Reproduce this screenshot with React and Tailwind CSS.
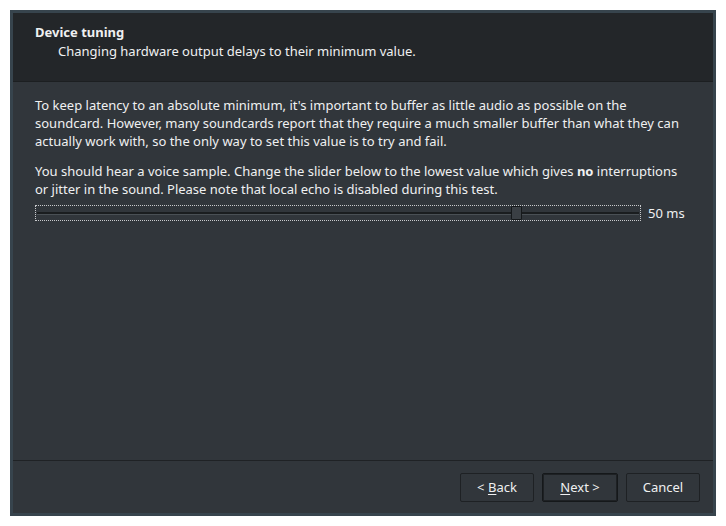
import React from 'react';

const font = { fontFamily: '"Noto Sans", "Open Sans", sans-serif' };

function WizardButton({ children, isDefault }) {
  return (
    <button
      className={
        'h-[29px] rounded-[2px] border bg-[#31363b] text-[13px] text-[#eff0f1] ' +
        (isDefault
          ? 'w-[76px] border-[#15181a] shadow-[inset_0_0_0_1px_#1e2124]'
          : 'w-[74px] border-[#1e2124]')
      }
    >
      {children}
    </button>
  );
}

function Slider({ value }) {
  return (
    <div className="flex items-center gap-[7px] pl-[22px]">
      <div className="relative h-[16px] w-[606px] border border-dotted border-[#c8cacc]">
        <div className="absolute left-[1px] right-[1px] top-[6px] h-[2px] bg-[#1a1d1f]" />
        <div className="absolute left-[1px] right-[1px] top-[8px] h-[1px] bg-[#4a5055]" />
        <div className="absolute left-[475px] top-[0px] h-[14px] w-[11px] rounded-[1px] border border-[#16191b] bg-[#3a3f44]" />
      </div>
      <span className="text-[13px]">{value} ms</span>
    </div>
  );
}

export default function App() {
  return (
    <div className="h-[526px] w-[726px] bg-white p-[10px]" style={font}>
      <div className="flex h-[506px] w-[706px] flex-col border-[3px] border-[#37444d] bg-[#31363b] text-[#eff0f1]">
        <div className="h-[69px] border-b border-[#1c1f21] bg-[#232629] pl-[22px] pt-[10px] text-[13px] leading-[19px]">
          <div className="font-bold">Device tuning</div>
          <div className="pl-[23px]">Changing hardware output delays to their minimum value.</div>
        </div>

        <div className="flex-1 pt-[14px] text-[13px] leading-[18px]">
          <p className="pl-[22px]">
            To keep latency to an absolute minimum, it's important to buffer as little audio as possible on the
            <br />
            soundcard. However, many soundcards report that they require a much smaller buffer than what they can
            <br />
            actually work with, so the only way to set this value is to try and fail.
          </p>
          <p className="mt-[12px] pl-[22px]">
            You should hear a voice sample. Change the slider below to the lowest value which gives <b>no</b> interruptions
            <br />
            or jitter in the sound. Please note that local echo is disabled during this test.
          </p>
          <div className="mt-[6px]">
            <Slider value={50} />
          </div>
        </div>

        <div className="flex h-[53px] items-start justify-end gap-[8px] border-t border-[#1f2225] pr-[13px] pt-[12px]">
          <WizardButton>
            &lt; <span className="underline underline-offset-2">B</span>ack
          </WizardButton>
          <WizardButton isDefault>
            <span className="underline underline-offset-2">N</span>ext &gt;
          </WizardButton>
          <WizardButton>Cancel</WizardButton>
        </div>
      </div>
    </div>
  );
}
